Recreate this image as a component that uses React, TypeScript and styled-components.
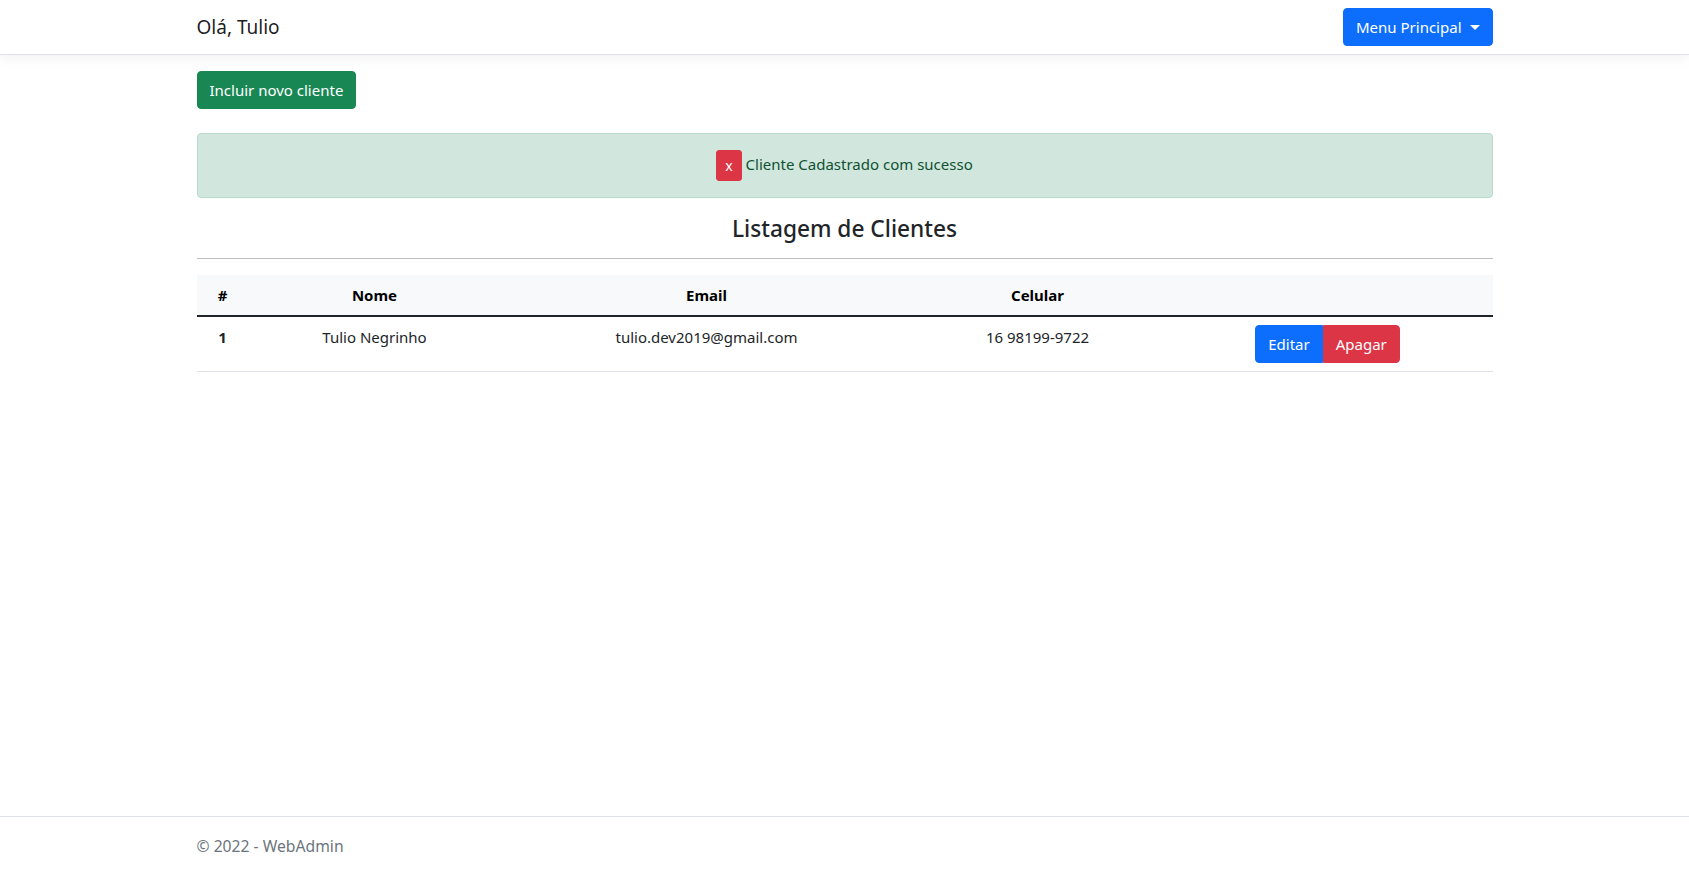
import styled, { createGlobalStyle } from 'styled-components';

const GlobalStyle = createGlobalStyle`
  *, *::before, *::after { box-sizing: border-box; }
  html, body { margin: 0; padding: 0; }
  body {
    font-family: "Segoe UI", "Noto Sans", "Liberation Sans", sans-serif;
    font-size: 15px;
    line-height: 24px;
    color: #212529;
    background: #fff;
  }
`

const Page = styled.div `
  min-height: 100vh;
  display: flex;
  flex-direction: column;
`

const Container = styled.div `
  width: 100%;
  max-width: 1320px;
  margin: 0 auto;
  padding: 0 12px;
`

const NavBar = styled.header `
  background: #fff;
  border-bottom: 1px solid #dee2e6;
  box-shadow: 0 .25rem .75rem rgba(0, 0, 0, .05);
  padding: 8px 0;
  margin-bottom: 16px;
`

const NavInner = styled(Container) `
  display: flex;
  align-items: center;
  justify-content: space-between;
`

const Brand = styled.span `
  font-size: 19px;
  color: rgba(0, 0, 0, .9);
  line-height: 30px;
`

const Button = styled.button<{ $variant: 'primary' | 'success' | 'danger', $small?: boolean }> `
  font-family: inherit;
  font-size: ${p => p.$small ? '14px' : '15px'};
  line-height: ${p => p.$small ? '21px' : '24px'};
  padding: ${p => p.$small ? '4px 8px' : '6px 12px'};
  border-radius: ${p => p.$small ? '3px' : '4px'};
  color: #fff;
  cursor: pointer;
  border: 1px solid transparent;
  background: ${p => p.$variant === 'primary' ? '#0d6efd' : p.$variant === 'success' ? '#198754' : '#dc3545'};
  border-color: ${p => p.$variant === 'primary' ? '#0d6efd' : p.$variant === 'success' ? '#198754' : '#dc3545'};
  vertical-align: middle;
`

const Caret = styled.span `
  display: inline-block;
  margin-left: 8px;
  vertical-align: 3px;
  border-top: 5px solid #fff;
  border-left: 5px solid transparent;
  border-right: 5px solid transparent;
`

const Main = styled(Container) `
  flex: 1;
  padding-bottom: 48px;
`

const Alert = styled.div `
  margin: 24px 0 16px;
  padding: 16px;
  border: 1px solid #badbcc;
  border-radius: 4px;
  background: #d1e7dd;
  color: #0f5132;
  text-align: center;
`

const Title = styled.h4 `
  margin: 0;
  text-align: center;
  font-size: 22.7px;
  font-weight: 500;
  line-height: 29px;
`

const Rule = styled.hr `
  margin: 15px 0 16px;
  border: 0;
  border-top: 1px solid rgba(0, 0, 0, .25);
`

const Table = styled.table `
  width: 100%;
  border-collapse: collapse;
  table-layout: fixed;
  color: #212529;
`

const HeadRow = styled.tr `
  background: #f8f9fa;
  border-bottom: 2px solid #212529;
`

const Th = styled.th<{ $w: number }> `
  width: ${p => p.$w}px;
  padding: 8px;
  text-align: center;
  font-weight: 700;
  color: #000;
`

const BodyRow = styled.tr `
  border-bottom: 1px solid #dee2e6;
`

const Td = styled.td<{ $bold?: boolean }> `
  padding: 8px;
  text-align: center;
  vertical-align: top;
  font-weight: ${p => p.$bold ? 700 : 400};
`

const BtnGroup = styled.div `
  display: inline-flex;
  & > button:first-child { border-top-right-radius: 0; border-bottom-right-radius: 0; }
  & > button:last-child { border-top-left-radius: 0; border-bottom-left-radius: 0; }
`

const Footer = styled.footer `
  border-top: 1px solid #dee2e6;
  font-size: 15.7px;
  line-height: 59px;
  color: #6c757d;
  white-space: nowrap;
`

const clientes = [
  { id: 1, nome: 'Tulio Negrinho', email: 'tulio.dev2019@gmail.com', celular: '16 98199-9722' },
]

const App = () =>
  <Page>
    <GlobalStyle />
    <NavBar>
      <NavInner>
        <Brand>Olá, Tulio</Brand>
        <Button $variant="primary">Menu Principal<Caret /></Button>
      </NavInner>
    </NavBar>
    <Main>
      <Button $variant="success">Incluir novo cliente</Button>
      <Alert>
        <Button $variant="danger" $small>x</Button> Cliente Cadastrado com sucesso
      </Alert>
      <Title>Listagem de Clientes</Title>
      <Rule />
      <Table>
        <thead>
          <HeadRow>
            <Th $w={52}>#</Th>
            <Th $w={252}>Nome</Th>
            <Th $w={412}>Email</Th>
            <Th $w={250}>Celular</Th>
            <Th $w={330}></Th>
          </HeadRow>
        </thead>
        <tbody>
          {clientes.map(c =>
            <BodyRow key={c.id}>
              <Td $bold>{c.id}</Td>
              <Td>{c.nome}</Td>
              <Td>{c.email}</Td>
              <Td>{c.celular}</Td>
              <Td>
                <BtnGroup>
                  <Button $variant="primary">Editar</Button>
                  <Button $variant="danger">Apagar</Button>
                </BtnGroup>
              </Td>
            </BodyRow>)}
        </tbody>
      </Table>
    </Main>
    <Footer>
      <Container>© 2022 - WebAdmin</Container>
    </Footer>
  </Page>

export default App
